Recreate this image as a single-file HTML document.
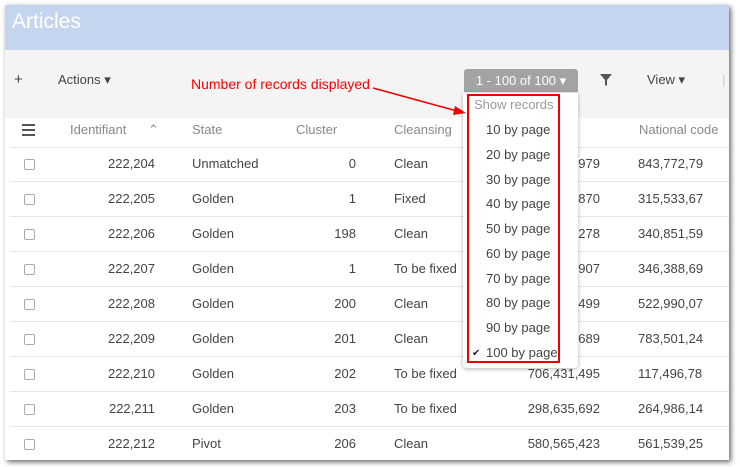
<!DOCTYPE html><html><head><style>
body{margin:0;width:740px;height:467px;background:#fff;font-family:"Liberation Sans",sans-serif;overflow:hidden;position:relative}
.pg{position:absolute;left:5px;top:5px;width:724px;height:455px;background:#fff;box-shadow:2px 2px 5px rgba(0,0,0,.6);overflow:hidden}
.hd{position:absolute;left:0;top:0;width:725px;height:45px;background:#c5d5ef;color:#fff;font-size:21px;line-height:34px;padding-left:7px;box-sizing:border-box}
.tb{position:absolute;left:0;top:45px;width:725px;height:68px;background:#f4f4f4}
.t{position:absolute;font-size:13px;color:#444;white-space:nowrap}
.r{text-align:right}
.row{position:absolute;left:5px;width:720px;height:34px;border-bottom:1px solid #e6e6e6}
.cb{position:absolute;left:19px;width:9px;height:9px;border:1px solid #aaa;border-radius:2px}
.h{color:#888}
.menu{position:absolute;left:458px;top:88px;width:115px;height:275px;background:#fff;box-shadow:0 1px 4px rgba(0,0,0,.3);border-radius:0 0 3px 3px}
.mi{position:absolute;left:23px;font-size:13px;color:#444}
</style></head><body>
<div class="pg">
<div class="hd">Articles</div>
<div class="tb"></div>
<div class="t" style="left:9px;top:66px;font-size:15px">+</div>
<div class="t" style="left:53px;top:67px">Actions ▾</div>
<div class="t" style="left:186px;top:71px;color:#f00;font-size:14px">Number of records displayed</div>
<div style="position:absolute;left:459px;top:64px;width:114px;height:23px;background:#a3a3a3;border-radius:3px 3px 0 0;color:#fff;font-size:13px;line-height:23px;text-align:center">1 - 100 of 100 ▾</div>
<svg style="position:absolute;left:595px;top:69px" width="12" height="13"><path d="M0 0H12L7 6V12L5 11V6Z" fill="#555"/></svg>
<div class="t" style="left:642px;top:67px">View ▾</div>
<div class="t" style="left:717px;top:67px;color:#ccc">|</div>
<div class="row" style="top:108px;height:34px"></div>
<div style="position:absolute;left:17px;top:119px;width:13px;height:2px;background:#555;box-shadow:0 5px #555,0 10px #555"></div>
<div class="t h" style="left:65px;top:117px">Identifiant</div>
<div class="t h" style="left:143px;top:117px">⌃</div>
<div class="t h" style="left:187px;top:117px">State</div>
<div class="t h" style="left:291px;top:117px">Cluster</div>
<div class="t h" style="left:389px;top:117px">Cleansing</div>
<div class="t h" style="left:560px;top:117px">e</div>
<div class="t h" style="left:634px;top:117px">National code</div>
<div id="rows"></div>
<div class="menu">
<div style="position:absolute;left:4px;top:1px;width:89px;height:265px;border:2px solid #e00"></div>
<div class="mi" style="left:11px;top:4px;color:#999">Show records</div>
<div class="mi" style="top:29px">10 by page</div>
<div class="mi" style="top:54px">20 by page</div>
<div class="mi" style="top:79px">30 by page</div>
<div class="mi" style="top:103px">40 by page</div>
<div class="mi" style="top:128px">50 by page</div>
<div class="mi" style="top:153px">60 by page</div>
<div class="mi" style="top:178px">70 by page</div>
<div class="mi" style="top:202px">80 by page</div>
<div class="mi" style="top:227px">90 by page</div>
<div class="mi" style="top:255px;left:9px;font-size:10px;color:#222">✔</div>
<div class="mi" style="top:252px;left:23px">100 by page</div>
</div>
<svg style="position:absolute;left:0;top:0" width="725" height="455"><line x1="368" y1="83" x2="452" y2="106" stroke="#e00" stroke-width="1.5"/><path d="M461 108 L450 101 L448 110 Z" fill="#e00"/></svg>
</div>
<script>
var d=[["222,204","Unmatched","0","Clean","979","843,772,79"],["222,205","Golden","1","Fixed","870","315,533,67"],["222,206","Golden","198","Clean","278","340,851,59"],["222,207","Golden","1","To be fixed","907","346,388,69"],["222,208","Golden","200","Clean","499","522,990,07"],["222,209","Golden","201","Clean","689","783,501,24"],["222,210","Golden","202","To be fixed","706,431,495","117,496,78"],["222,211","Golden","203","To be fixed","298,635,692","264,986,14"],["222,212","Pivot","206","Clean","580,565,423","561,539,25"]];
var h="";d.forEach(function(r,i){var y=142+i*35;h+='<div class="row" style="top:'+y+'px"></div><div class="cb" style="top:'+(y+12)+'px"></div>'+
'<div class="t r" style="left:60px;width:90px;top:'+(y+9)+'px">'+r[0]+'</div><div class="t" style="left:187px;top:'+(y+9)+'px">'+r[1]+'</div>'+
'<div class="t r" style="left:300px;width:51px;top:'+(y+9)+'px">'+r[2]+'</div><div class="t" style="left:389px;top:'+(y+9)+'px">'+r[3]+'</div>'+
'<div class="t r" style="left:480px;width:115px;top:'+(y+9)+'px">'+r[4]+'</div><div class="t" style="left:633px;top:'+(y+9)+'px">'+r[5]+'</div>';});
document.getElementById("rows").innerHTML=h;
</script>
</body></html>
